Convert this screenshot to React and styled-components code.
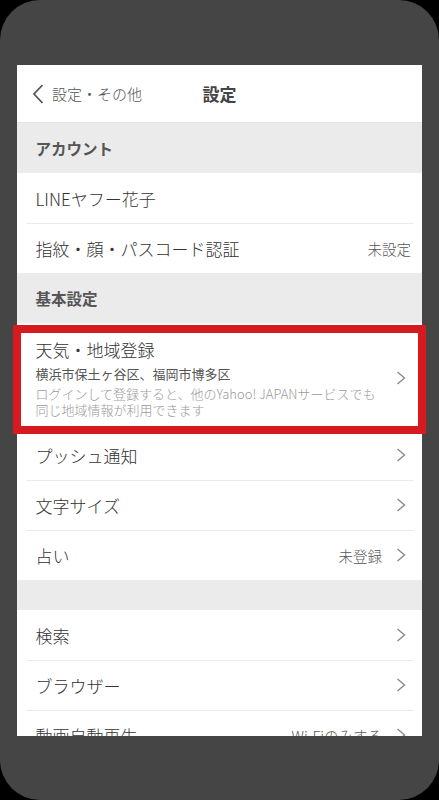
import React from "react";
import styled, { createGlobalStyle } from "styled-components";

const GlobalStyle = createGlobalStyle`
  html, body {
    margin: 0;
    padding: 0;
    background: #000;
  }
  body {
    font-family: "Noto Sans CJK JP", "Noto Sans", sans-serif;
  }
`;

function Chevron() {
  return (
    <ChevronIcon viewBox="0 0 10 14" width="10" height="14">
      <polyline points="1.5,1 8.5,7 1.5,13" fill="none" stroke="#8a8a8a" strokeWidth="1.4" />
    </ChevronIcon>
  );
}

function SettingRow({ label, value, chevron }) {
  return (
    <Row $chevron={chevron}>
      <Label>{label}</Label>
      {value && <Value>{value}</Value>}
      {chevron && <Chevron />}
    </Row>
  );
}

function App() {
  return (
    <>
      <GlobalStyle />
      <Phone>
        <Screen>
          <Header>
            <Back>
              <svg viewBox="0 0 12 20" width="12" height="20">
                <polyline points="10.5,1 2,10 10.5,19" fill="none" stroke="#555" strokeWidth="1.8" />
              </svg>
              <span>設定・その他</span>
            </Back>
            <Title>設定</Title>
            <span />
          </Header>

          <SectionTitle>アカウント</SectionTitle>
          <Group>
            <SettingRow label="LINEヤフー花子" />
            <SettingRow label="指紋・顔・パスコード認証" value="未設定" />
          </Group>

          <SectionTitle>基本設定</SectionTitle>
          <Group>
            <WeatherRow>
              <WeatherText>
                <WeatherTitle>天気・地域登録</WeatherTitle>
                <WeatherPlaces>横浜市保土ヶ谷区、福岡市博多区</WeatherPlaces>
                <WeatherNote>
                  ログインして登録すると、他のYahoo! JAPANサービスでも
                  <br />
                  同じ地域情報が利用できます
                </WeatherNote>
              </WeatherText>
              <Chevron />
            </WeatherRow>
            <SettingRow label="プッシュ通知" chevron />
            <SettingRow label="文字サイズ" chevron />
            <SettingRow label="占い" value="未登録" chevron />
          </Group>

          <Spacer />
          <Group>
            <SettingRow label="検索" chevron />
            <SettingRow label="ブラウザー" chevron />
            <SettingRow label="動画自動再生" value="Wi-Fiのみする" chevron />
          </Group>
        </Screen>
      </Phone>
    </>
  );
}

export default App;

const Phone = styled.div`
  width: 439px;
  height: 800px;
  box-sizing: border-box;
  padding: 65px 17px 64px;
  background: #454545;
  border-radius: 40px;
  display: flex;
  flex-direction: column;
`;

const Screen = styled.div`
  flex: 1;
  min-height: 0;
  background: #fff;
  display: flex;
  flex-direction: column;
  overflow-x: visible;
  overflow-y: clip;
`;

const Header = styled.div`
  flex: none;
  height: 58px;
  box-sizing: border-box;
  border-bottom: 1px solid #e3e3e3;
  display: grid;
  grid-template-columns: 1fr auto 1fr;
  align-items: center;
`;

const Back = styled.div`
  display: flex;
  align-items: center;
  gap: 8px;
  padding-left: 15px;
  font-size: 15px;
  font-weight: 300;
  color: #555;
`;

const Title = styled.div`
  font-size: 17px;
  font-weight: 700;
  color: #444;
`;

const SectionTitle = styled.div`
  flex: none;
  height: 50px;
  display: flex;
  align-items: center;
  padding-left: 18.5px;
  background: #ebebeb;
  font-size: 15.5px;
  font-weight: 700;
  color: #555;
`;

const Spacer = styled.div`
  flex: none;
  height: 30px;
  background: #ebebeb;
`;

const Group = styled.div`
  flex: none;
  display: flex;
  flex-direction: column;

  & > * + *::before {
    content: "";
    position: absolute;
    top: 0;
    left: 9px;
    right: 8px;
    height: 1px;
    background: #ebebeb;
  }
`;

const Row = styled.div`
  position: relative;
  height: 50px;
  box-sizing: border-box;
  display: flex;
  align-items: center;
  padding: 0 ${(p) => (p.$chevron ? 16 : 11)}px 0 18.5px;
`;

const Label = styled.div`
  flex: 1;
  font-size: 17px;
  font-weight: 300;
  color: #333;
`;

const Value = styled.div`
  font-size: 14.5px;
  font-weight: 300;
  color: #555;
  margin-right: 14px;

  &:last-child {
    margin-right: 0;
  }
`;

const ChevronIcon = styled.svg`
  flex: none;
  display: block;
`;

const WeatherRow = styled.div`
  position: relative;
  height: 107px;
  box-sizing: border-box;
  display: flex;
  align-items: center;
  padding: 15px 16px 12px 18.5px;

  &::after {
    content: "";
    position: absolute;
    top: 2px;
    bottom: -4px;
    left: -4px;
    right: -4px;
    border: 8px solid #d71a1f;
    z-index: 2;
    pointer-events: none;
  }
`;

const WeatherText = styled.div`
  flex: 1;
  display: flex;
  flex-direction: column;
  align-self: flex-start;
`;

const WeatherTitle = styled.div`
  font-size: 17px;
  line-height: 24px;
  font-weight: 300;
  color: #333;
`;

const WeatherPlaces = styled.div`
  margin-top: 3px;
  font-size: 13px;
  line-height: 18px;
  color: #555;
`;

const WeatherNote = styled.div`
  margin-top: 3px;
  font-size: 13px;
  line-height: 16px;
  font-weight: 300;
  color: #9a9a9a;
  white-space: nowrap;
`;
